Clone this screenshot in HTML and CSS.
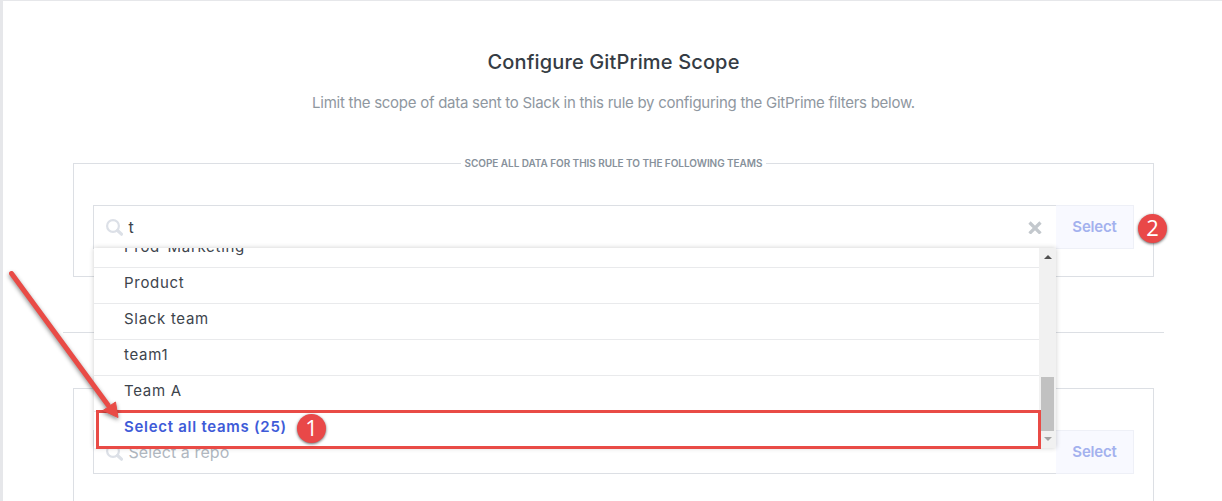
FILE: index.html
```html
<!DOCTYPE html>
<html lang="en">
<head>
    <meta charset="UTF-8">
    <meta name="viewport" content="width=device-width, initial-scale=1.0">
    <title>Configure GitPrime Scope</title>
    <link rel="stylesheet" href="styles.css">
</head>
<body>

<main class="panel">
    <h1 class="title">Configure GitPrime Scope</h1>
    <p class="subtitle">Limit the scope of data sent to Slack in this rule by configuring the GitPrime filters below.</p>

    <section class="scope">
        <h2 class="scope-label"><span>SCOPE ALL DATA FOR THIS RULE TO THE FOLLOWING TEAMS</span></h2>
        <div class="picker">
            <div class="search">
                <svg class="search-icon" width="18" height="18" viewBox="0 0 18 18">
                    <circle cx="7" cy="7" r="5.9"/>
                    <path d="M11.5 11.5L15.5 15.2"/>
                </svg>
                <span class="search-text">t</span>
                <svg class="clear-icon" width="14" height="14" viewBox="0 0 14 14">
                    <path d="M1.5 2.5L12.5 13.5M12.5 2.5L1.5 13.5"/>
                </svg>
            </div>
            <button class="select-button" type="button">Select</button>

            <div class="dropdown">
                <ul class="options">
                    <li>Prod-Marketing</li>
                    <li>Product</li>
                    <li>Slack team</li>
                    <li>team1</li>
                    <li>Team A</li>
                    <li class="select-all">Select all teams (25)</li>
                </ul>
                <div class="scrollbar">
                    <span class="arrow-up"></span>
                    <span class="thumb"></span>
                    <span class="arrow-down"></span>
                </div>
            </div>
        </div>
    </section>

    <hr class="divider">

    <section class="scope scope-repos">
        <div class="picker">
            <div class="search">
                <svg class="search-icon" width="18" height="18" viewBox="0 0 18 18">
                    <circle cx="7" cy="7" r="5.9"/>
                    <path d="M11.5 11.5L15.5 15.2"/>
                </svg>
                <span class="search-text placeholder">Select a repo</span>
            </div>
            <button class="select-button" type="button">Select</button>
        </div>
    </section>
</main>

<!-- callouts -->
<div class="highlight"></div>
<svg class="pointer" width="130" height="165" viewBox="0 0 130 165">
    <path class="pointer-line" d="M11.5 13.5L108 145"/>
    <path class="pointer-head" d="M118 157.5L103 150.5L115.5 142Z"/>
</svg>
<span class="step step-one">1</span>
<span class="step step-two">2</span>

</body>
</html>
```

FILE: styles.css
```css
* {
    box-sizing: border-box;
}

body {
    margin: 0;
    height: 501px;
    padding: 1px 0 0 3px;
    background: #e6e7ea;
    font-family: Inter, "Liberation Sans", sans-serif;
    color: #3d444c;
}

.panel {
    height: 500px;
    padding: 48px 68px 0 70px;
    background: #fff;
}

.title {
    margin: 0;
    font-size: 20px;
    line-height: 26px;
    font-weight: 500;
    letter-spacing: 0.15px;
    text-align: center;
    color: #353c44;
}

.subtitle {
    margin: 16px 0 0;
    font-size: 15px;
    line-height: 24px;
    letter-spacing: -0.27px;
    text-align: center;
    color: #8f979f;
}

.scope {
    height: 114px;
    margin-top: 48px;
    padding: 0 19px;
    border: 1px solid #dcdfe4;
}

.scope-label {
    display: flex;
    justify-content: center;
    height: 14px;
    margin: -8px 0 35px;
    font-size: 10px;
    line-height: 14px;
    font-weight: 600;
    color: #87919b;
}

.scope-label span {
    padding: 0 4px;
    background: #fff;
    letter-spacing: -0.05px;
}

.scope-repos {
    height: 113px;
    margin-top: 55px;
    padding-top: 41px;
    border-bottom: 0;
}

.picker {
    position: relative;
    display: flex;
    height: 44px;
}

.search {
    display: flex;
    flex: 1;
    align-items: center;
    padding: 0 14px 0 12px;
    border: 1px solid #dcdfe4;
    border-right: 0;
}

.search-icon {
    margin-top: 1px;
    fill: none;
    stroke: #dce0e7;
    stroke-width: 2.2;
}

.search-icon path {
    stroke-width: 3.2;
    stroke-linecap: round;
}

.search-text {
    flex: 1;
    padding-left: 4.5px;
    font-size: 16px;
    letter-spacing: 0.1px;
}

.placeholder {
    color: #b0b7bf;
}

.clear-icon {
    fill: none;
    stroke: #c3c8cd;
    stroke-width: 3.2;
}

.select-button {
    width: 78px;
    padding: 0 0 2px;
    border: 1px solid #eef0f7;
    border-left: 0;
    background: #f8f9ff;
    color: #a3b1ee;
    font: 600 15px Inter, "Liberation Sans", sans-serif;
    letter-spacing: -0.2px;
}

.dropdown {
    position: absolute;
    z-index: 2;
    top: 43px;
    left: 1px;
    display: flex;
    width: 962px;
    height: 200px;
    overflow: hidden;
    background: #fff;
    box-shadow: 0 0 5px rgba(0, 0, 0, 0.2);
}

/* list is scrolled, first row is half hidden */
.options {
    flex: 1;
    margin: -16px 0 0;
    padding: 0;
    list-style: none;
}

.options li {
    height: 36px;
    padding-left: 30px;
    border-bottom: 1px solid #e9eaec;
    font-size: 15px;
    line-height: 30px;
    letter-spacing: 0.7px;
}

.options .select-all {
    border: 0;
    font-weight: 600;
    letter-spacing: 0.72px;
    color: #3e5bd8;
}

.scrollbar {
    display: flex;
    flex-direction: column;
    align-items: center;
    width: 17px;
    padding: 7px 0 7px;
    background: #f1f1f1;
}

.arrow-up,
.arrow-down {
    border: 4px solid transparent;
    border-top: 0;
    border-bottom: 4px solid #505050;
}

.arrow-down {
    margin-top: 6px;
    border-top: 4px solid #a3a3a3;
    border-bottom: 0;
}

.thumb {
    width: 13px;
    height: 54px;
    margin-top: auto;
    background: #c1c1c1;
}

.divider {
    height: 1px;
    margin: 55px -10px 0;
    border: 0;
    background: #dcdfe4;
}

.highlight {
    position: absolute;
    z-index: 3;
    top: 410px;
    left: 96px;
    width: 945px;
    height: 39px;
    border: 3px solid #e94b46;
}

.pointer {
    position: absolute;
    z-index: 4;
    top: 260px;
    left: 0;
    filter: drop-shadow(0 2px 2px rgba(0, 0, 0, 0.45));
}

.pointer-line {
    stroke: #e94b46;
    stroke-width: 5;
    stroke-linecap: round;
}

.pointer-head {
    fill: #e94b46;
    stroke: #e94b46;
}

.step {
    position: absolute;
    z-index: 4;
    width: 29px;
    height: 29px;
    border-radius: 50%;
    background: #e94848;
    box-shadow: 0 1px 3px rgba(0, 0, 0, 0.6);
    color: #fff;
    font: 22px/27px "Open Sans", sans-serif;
    text-align: center;
}

.step-one {
    top: 414px;
    left: 297px;
}

.step-two {
    top: 214px;
    left: 1138px;
}
```
